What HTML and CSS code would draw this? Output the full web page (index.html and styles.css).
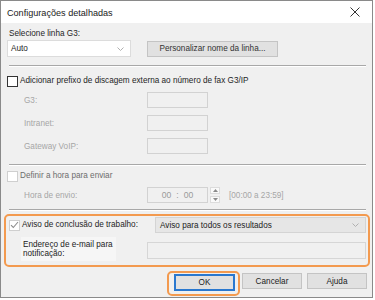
FILE: index.html
```html
<!DOCTYPE html>
<html lang="pt">
<head>
<meta charset="utf-8">
<title>Configurações detalhadas</title>
<link rel="stylesheet" href="styles.css">
</head>
<body>
<div class="dialog">
  <div class="titlebar">
    <span class="title">Configurações detalhadas</span>
    <svg class="close" width="10" height="10" viewBox="0 0 10 10"><path d="M0.5 0.5L9.5 9.5M9.5 0.5L0.5 9.5" stroke="#333" stroke-width="1" fill="none"/></svg>
  </div>
  <div class="body">
    <div class="lbl-top">Selecione linha G3:</div>
    <div class="row-select">
      <div class="combo combo-auto"><span>Auto</span><svg class="chev" width="7" height="4" viewBox="0 0 7 4"><path d="M0.5 0.5L3.5 3.5L6.5 0.5" stroke="#b0b0b0" fill="none"/></svg></div>
      <div class="btn btn-name">Personalizar nome da linha...</div>
    </div>
    <div class="sep"></div>
    <div class="check check-prefix"><span class="box"></span><span>Adicionar prefixo de discagem externa ao número de fax G3/IP</span></div>
    <div class="field f-first"><span class="flabel">G3:</span><span class="input"></span></div>
    <div class="field"><span class="flabel">Intranet:</span><span class="input"></span></div>
    <div class="field"><span class="flabel">Gateway VoIP:</span><span class="input"></span></div>
    <div class="sep sep2"></div>
    <div class="check check-time dis"><span class="box box-dis"></span><span>Definir a hora para enviar</span></div>
    <div class="field f-time">
      <span class="flabel">Hora de envio:</span>
      <span class="input time"><span>00</span><span class="colon">:</span><span>00</span></span>
      <span class="spin"><span class="sp up"><svg width="5" height="3" viewBox="0 0 5 3"><path d="M0 3L2.5 0L5 3Z" fill="#8a8a8a"/></svg></span><span class="sp down"><svg width="5" height="3" viewBox="0 0 5 3"><path d="M0 0L2.5 3L5 0Z" fill="#8a8a8a"/></svg></span></span>
      <span class="range">[00:00 a 23:59]</span>
    </div>
    <div class="sep sep3"></div>
    <div class="hl">
      <div class="hl-row1">
        <div class="check check-notice"><span class="box box-checked"><svg width="9" height="8" viewBox="0 0 9 8"><path d="M1 4.2L3.3 6.5L8 1" stroke="#8c8c8c" stroke-width="1.1" fill="none"/></svg></span><span>Aviso de conclusão de trabalho:</span></div>
        <div class="combo combo-notice"><span>Aviso para todos os resultados</span><svg class="chev" width="7" height="4" viewBox="0 0 7 4"><path d="M0.5 0.5L3.5 3.5L6.5 0.5" stroke="#b0b0b0" fill="none"/></svg></div>
      </div>
      <div class="hl-row2">
        <div class="mail-label">Endereço de e-mail para<br>notificação:</div>
        <span class="input mail"></span>
      </div>
    </div>
    <div class="buttons">
      <div class="ok-ring"><div class="btn btn-ok">OK</div></div>
      <div class="btn">Cancelar</div>
      <div class="btn">Ajuda</div>
    </div>
  </div>
</div>
</body>
</html>
```
FILE: styles.css
```css
html, body {
  margin: 0;
  padding: 0;
  background: #ffffff;
}
body {
  font-family: "Liberation Sans", Arial, sans-serif;
  font-size: 8.2px;
  color: #1e1e1e;
}
.dialog {
  width: 373px;
  height: 298px;
  box-sizing: border-box;
  border: 1px solid #8a8a8a;
  background: #f0f0f0;
  display: flex;
  flex-direction: column;
}
.titlebar {
  height: 22px;
  background: #ffffff;
  display: flex;
  align-items: center;
  justify-content: space-between;
  padding: 0 12px 0 6px;
  flex: none;
}
.title {
  font-size: 9.1px;
  color: #1a1a1a;
  margin-top: 1px;
}
.close { display: block; }
.body {
  padding: 0 3px;
  display: flex;
  flex-direction: column;
}
.lbl-top {
  margin: 5px 0 0 5px;
  line-height: 11px;
  height: 11px;
}
.row-select {
  display: flex;
  align-items: center;
  margin-top: 1px;
  height: 17px;
}
.combo {
  box-sizing: border-box;
  display: flex;
  align-items: center;
  justify-content: space-between;
  padding: 0 6px 0 3px;
}
.combo-auto {
  margin-left: 3px;
  width: 124px;
  height: 17px;
  background: #ffffff;
  border: 1px solid #dcdcdc;
}
.btn {
  box-sizing: border-box;
  width: 60px;
  height: 16px;
  background: #e1e1e1;
  border: 1px solid #c4c4c4;
  display: flex;
  align-items: center;
  justify-content: center;
  color: #222;
}
.btn-name {
  width: 131px;
  margin-left: 16px;
  color: #333;
}
.sep {
  margin: 8px 0 0 5px;
  width: 357px;
  height: 2px;
  box-sizing: border-box;
  border-top: 1px solid #a8a8a8;
  border-bottom: 1px solid #ffffff;
}
.sep2 { margin-top: 10px; }
.sep3 { margin-top: 6px; }
.check {
  display: flex;
  align-items: center;
  height: 12px;
  line-height: 12px;
}
.box {
  box-sizing: border-box;
  width: 11px;
  height: 11px;
  background: #fff;
  border: 1px solid #333;
  margin-right: 2px;
  flex: none;
  display: flex;
  align-items: center;
  justify-content: center;
}
.box-dis { border-color: #cfcfcf; }
.box-checked { border-color: #cfcfcf; }
.check-prefix { margin: 8px 0 0 3px; }
.check-time { margin: 4px 0 0 3px; }
.dis { color: #6d6d6d; }
.field {
  display: flex;
  align-items: center;
  margin: 7px 0 0 20px;
  height: 16px;
  color: #a6a6a6;
}
.f-first { margin-top: 5px; }
.f-time { margin-top: 5px; }
.flabel { width: 123px; flex: none; }
.input {
  box-sizing: border-box;
  width: 61px;
  height: 16px;
  border: 1px solid #d2d2d2;
  background: #f0f0f0;
  flex: none;
}
.time {
  display: flex;
  align-items: center;
  justify-content: center;
  color: #9a9a9a;
  font-size: 8.6px;
}
.colon { margin: 0 5px; }
.spin {
  margin-left: 2px;
  width: 10px;
  height: 16px;
  display: flex;
  flex-direction: column;
  justify-content: space-between;
}
.sp {
  height: 7px;
  background: #fafafa;
  border: 1px solid #dcdcdc;
  box-sizing: border-box;
  display: flex;
  align-items: center;
  justify-content: center;
}
.sp svg { display: block; }
.range { margin-left: 9px; color: #a6a6a6; }
.hl {
  margin-top: 3px;
  width: 366px;
  height: 53px;
  box-sizing: border-box;
  border: 2px solid #f39a4f;
  border-radius: 5px;
  padding: 1px 2px 0 3px;
}
.hl-row1 {
  display: flex;
  align-items: center;
  height: 16px;
}
.check-notice { width: 146px; flex: none; }
.combo-notice {
  width: 212px;
  height: 16px;
  background: #e6e6e6;
  border: 1px solid #d4d4d4;
  color: #222;
  padding-left: 4px;
}
.hl-row2 {
  display: flex;
  align-items: flex-start;
  margin-top: 4px;
}
.mail-label {
  margin-left: 12px;
  width: 95px;
  height: 24px;
  box-sizing: border-box;
  padding: 3px 0 0 2px;
  background: #f6f6f6;
  line-height: 9px;
  color: #222;
  flex: none;
}
.mail {
  margin: 5px 0 0 31px;
  width: 219px;
  height: 17px;
  border-color: #d6d6d6;
}
.buttons {
  display: flex;
  justify-content: flex-end;
  align-items: flex-start;
  margin: 4px 2px 0 0;
  gap: 5px;
}
.buttons > .btn { margin-top: 2px; }
.ok-ring {
  box-sizing: border-box;
  border: 2px solid #f39a4f;
  border-radius: 5px;
  padding: 1px 3px 3px 5px;
  margin-right: -3px;
}
.btn-ok {
  border: 1px solid #2a78cf;
  box-shadow: inset 0 0 0 1px #2a78cf;
  height: 17px;
  width: 61px;
}
```
